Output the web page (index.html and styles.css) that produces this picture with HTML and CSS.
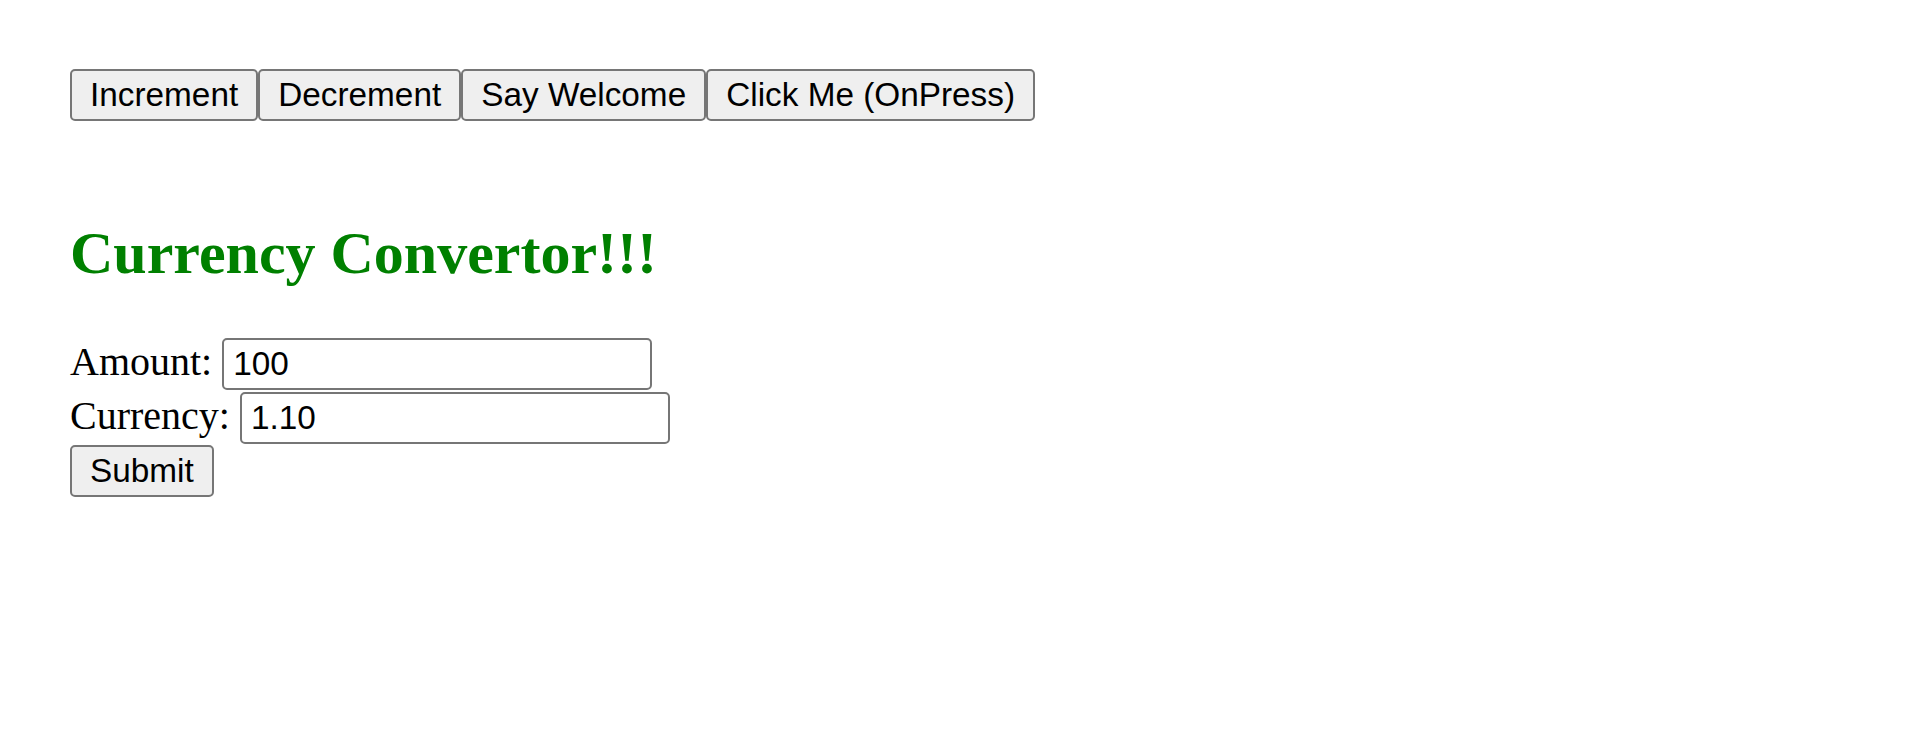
FILE: index.html
```html
<!DOCTYPE html>
<html lang="en">
<head>
<meta charset="utf-8">
<title>Currency Convertor</title>
<link rel="stylesheet" href="styles.css">
</head>
<body>
<div class="app">
  <div class="actions"><button class="btn" type="button">Increment</button><button class="btn" type="button">Decrement</button><button class="btn" type="button">Say Welcome</button><button class="btn" type="button">Click Me (OnPress)</button></div>
  <h2 class="title">Currency Convertor!!!</h2>
  <form class="converter">
    <div class="field"><label>Amount: <input class="text-input" type="text" value="100"></label></div>
    <div class="field"><label>Currency: <input class="text-input" type="text" value="1.10"></label></div>
    <div class="field"><button class="btn" type="submit">Submit</button></div>
  </form>
</div>
</body>
</html>
```

FILE: styles.css
```css
html, body {
  margin: 0;
  padding: 0;
  background: #ffffff;
}

body {
  font-family: "Liberation Serif", "Times New Roman", serif;
  font-size: 40px;
  color: #000000;
}

.app {
  padding: 69px 70px 0 70px;
}

.actions {
  display: flex;
  align-items: flex-start;
}

.btn {
  font-family: "Liberation Sans", Arial, sans-serif;
  font-size: 33.33px;
  line-height: normal;
  color: #000000;
  background: #efefef;
  border: 2px solid #767676;
  border-radius: 5px;
  padding: 5px 18px;
  margin: 0;
  height: 52px;
  box-sizing: border-box;
}

.title {
  font-family: "Liberation Serif", "Times New Roman", serif;
  font-size: 60px;
  font-weight: bold;
  line-height: normal;
  color: #008000;
  margin: 98px 0 50px 0;
}

.converter {
  margin: 0;
}

.field {
  line-height: normal;
  margin-bottom: 1.5px;
}

.text-input {
  font-family: "Liberation Sans", Arial, sans-serif;
  font-size: 33.33px;
  color: #000000;
  background: #ffffff;
  border: 2px solid #767676;
  border-radius: 5px;
  padding: 5px 9px;
  margin: 0;
  width: 430px;
  height: 52px;
  box-sizing: border-box;
}
```
